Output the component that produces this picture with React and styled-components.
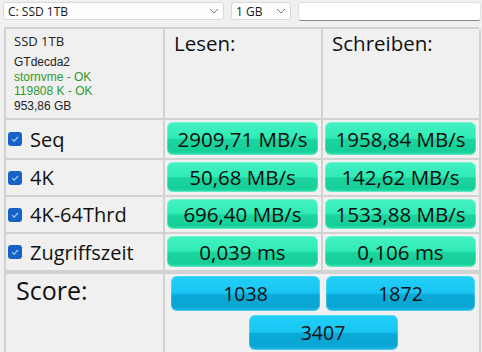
import React from 'react';
import styled, { createGlobalStyle } from 'styled-components';

const Global = createGlobalStyle`
  html, body { margin: 0; padding: 0; background: #f0f0f0; }
  body { font-family: "Segoe UI", "Open Sans", "Noto Sans", sans-serif; color: #111; }
`;

const Page = styled.div`
  width: 482px;
  height: 352px;
  overflow: hidden;
  background: #f0f0f0;
`;

const Toolbar = styled.div`
  display: flex;
  align-items: center;
  height: 21px;
  padding: 1px 1px 0 3px;
  box-sizing: border-box;
  gap: 7px;
`;

const Combo = styled.div`
  box-sizing: border-box;
  width: ${p => p.w}px;
  height: 18px;
  display: flex;
  align-items: center;
  justify-content: space-between;
  padding: 0 4px 0 4px;
  background: #fdfdfd;
  border: 1px solid #d8d8d8;
  border-radius: 3px;
  font-size: 12px;
  color: #1a1a1a;
`;

const Chevron = () => (
  <svg width="10" height="6" viewBox="0 0 10 6">
    <path d="M1 1 L5 5 L9 1" fill="none" stroke="#7a7a7a" strokeWidth="1" />
  </svg>
);

const TextField = styled.div`
  flex: 1;
  height: 19px;
  box-sizing: border-box;
  background: #fff;
  border: 1px solid #e2e2e2;
  border-bottom: 1px solid #8a8a8a;
  border-radius: 3px;
`;

const Table = styled.div`
  margin: 6px 0 0 4px;
  width: 475px;
  display: grid;
  grid-template-columns: 159px 158px 158px;
  grid-template-rows: 91px 40px 37px 37px 38px 82px;
  border-top: 2px solid #d2d2d2;
  border-left: 2px solid #d2d2d2;
  box-sizing: border-box;
`;

const Cell = styled.div`
  box-sizing: border-box;
  border-right: 2px solid #d2d2d2;
  border-bottom: 2px solid #d2d2d2;
  ${p => p.span && `grid-column: span ${p.span};`}
  ${p => p.score && `border-top: 2px solid #d2d2d2;`}
`;

const Info = styled(Cell)`
  padding: 3px 0 0 8px;
  font-family: "Liberation Sans", Arial, sans-serif;
  font-size: 12px;
  line-height: 14.5px;
`;

const DriveName = styled.div`
  font-family: "Segoe UI", "Open Sans", sans-serif;
  font-size: 13px;
  line-height: 18px;
  color: #222;
  margin-bottom: 5px;
`;

const InfoLine = styled.div`
  color: ${p => (p.ok ? '#2f9a2f' : '#222')};
`;

const Heading = styled(Cell)`
  padding: 2px 0 0 9px;
  font-size: 20.5px;
  line-height: 24px;
`;

const Label = styled(Cell)`
  display: flex;
  align-items: center;
  gap: 8px;
  padding-left: 2px;
  font-size: 20px;
`;

const Check = styled.span`
  width: 14px;
  height: 14px;
  border-radius: 3px;
  background: #1762c6;
  display: inline-flex;
  align-items: center;
  justify-content: center;
  flex-shrink: 0;
`;

const ValueCell = styled(Cell)`
  padding: 2px 3px 3px 2px;
  display: flex;
`;

const Pill = styled.div`
  flex: 1;
  display: flex;
  align-items: center;
  justify-content: center;
  border-radius: 6px;
  font-size: 20.5px;
  color: #0c0c0c;
  background: linear-gradient(
    to bottom,
    #44f1c2 0%,
    #30ecb6 48%,
    #1bd49e 54%,
    #16cf98 88%,
    #2ee3ae 100%
  );
  box-shadow: inset 0 0 0 1px rgba(255, 255, 255, 0.25);
`;

const ScoreLabel = styled(Cell)`
  padding: 0 0 0 10px;
  font-size: 25px;
  line-height: 32px;
`;

const ScoreArea = styled(Cell)`
  display: flex;
  flex-wrap: wrap;
  justify-content: center;
  align-content: flex-start;
  gap: 4px 6px;
  padding: 2px 2px 0 4px;
`;

const ScorePill = styled.div`
  width: 149px;
  height: 35px;
  display: flex;
  align-items: center;
  justify-content: center;
  border-radius: 6px;
  font-size: 19.5px;
  color: #111;
  background: linear-gradient(
    to bottom,
    #20cff8 0%,
    #19c6f2 48%,
    #0aa9d6 54%,
    #0aa5d2 88%,
    #1ebde8 100%
  );
  box-shadow: inset 0 0 0 1px rgba(255, 255, 255, 0.2);
`;

const CheckIcon = () => (
  <svg width="10" height="10" viewBox="0 0 10 10">
    <path d="M2.2 5.2 L4.2 7.1 L7.9 3" fill="none" stroke="#a9c9f1" strokeWidth="1.2" />
  </svg>
);

const rows = [
  { name: 'Seq', read: '2909,71 MB/s', write: '1958,84 MB/s' },
  { name: '4K', read: '50,68 MB/s', write: '142,62 MB/s' },
  { name: '4K-64Thrd', read: '696,40 MB/s', write: '1533,88 MB/s' },
  { name: 'Zugriffszeit', read: '0,039 ms', write: '0,106 ms' },
];

const App = () => (
  <Page>
    <Global />
    <Toolbar>
      <Combo w={221}>
        <span>C: SSD 1TB</span>
        <Chevron />
      </Combo>
      <Combo w={60}>
        <span>1 GB</span>
        <Chevron />
      </Combo>
      <TextField />
    </Toolbar>
    <Table>
      <Info>
        <DriveName>SSD 1TB</DriveName>
        <InfoLine>GTdecda2</InfoLine>
        <InfoLine ok>stornvme - OK</InfoLine>
        <InfoLine ok>119808 K - OK</InfoLine>
        <InfoLine>953,86 GB</InfoLine>
      </Info>
      <Heading>Lesen:</Heading>
      <Heading>Schreiben:</Heading>
      {rows.map(r => (
        <React.Fragment key={r.name}>
          <Label>
            <Check><CheckIcon /></Check>
            {r.name}
          </Label>
          <ValueCell><Pill>{r.read}</Pill></ValueCell>
          <ValueCell><Pill>{r.write}</Pill></ValueCell>
        </React.Fragment>
      ))}
      <ScoreLabel score>Score:</ScoreLabel>
      <ScoreArea score span={2}>
        <ScorePill>1038</ScorePill>
        <ScorePill>1872</ScorePill>
        <ScorePill>3407</ScorePill>
      </ScoreArea>
    </Table>
  </Page>
);

export default App;
